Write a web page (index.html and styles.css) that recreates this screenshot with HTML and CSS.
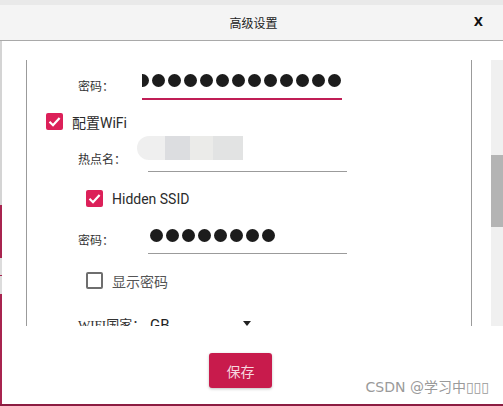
FILE: index.html
```html
<!DOCTYPE html>
<html lang="zh">
<head>
  <meta charset="UTF-8">
  <meta name="viewport" content="width=device-width, initial-scale=1.0">
  <title>高级设置</title>
  <link rel="stylesheet" href="styles.css">
</head>
<body>
  <div class="top-strip"></div>
  <div class="header">
    <span class="title">高级设置</span>
    <span class="close">X</span>
  </div>

  <div class="main">
    <div class="edge"></div>
    <div class="content">
      <div class="scroll-row">
        <div class="frame">
          <div class="prev-line"></div>

          <div class="field-row pw-row">
            <span class="label">密码：</span>
            <div class="field active">
              <div class="dots dots-long">
                <i></i><i></i><i></i><i></i><i></i><i></i><i></i><i></i><i></i><i></i><i></i><i></i><i></i>
              </div>
            </div>
          </div>

          <label class="check wifi-check">
            <span class="box checked"><svg viewBox="0 0 17 17"><path d="M3.5 8.8 L7 12.2 L13.6 5" /></svg></span>
            <span class="check-text">配置WiFi</span>
          </label>

          <div class="field-row ssid-row">
            <span class="label">热点名：</span>
            <div class="field plain">
              <div class="blur"></div>
            </div>
          </div>

          <label class="check sub-check hidden-check">
            <span class="box checked"><svg viewBox="0 0 17 17"><path d="M3.5 8.8 L7 12.2 L13.6 5" /></svg></span>
            <span class="check-text">Hidden SSID</span>
          </label>

          <div class="field-row pw2-row">
            <span class="label">密码：</span>
            <div class="field plain">
              <div class="dots dots-short">
                <i></i><i></i><i></i><i></i><i></i><i></i><i></i><i></i>
              </div>
            </div>
          </div>

          <label class="check sub-check show-check">
            <span class="box"></span>
            <span class="check-text muted">显示密码</span>
          </label>

          <div class="field-row country-row">
            <span class="label serif">WIFI国家：</span>
            <div class="select">
              <span>GB</span>
              <span class="arrow"></span>
            </div>
          </div>
        </div>
        <div class="scrollbar"><div class="thumb"></div></div>
      </div>

      <div class="actions">
        <button class="save">保存</button>
      </div>
    </div>
    <div class="watermark">CSDN @学习中▯▯▯</div>
  </div>
</body>
</html>
```

FILE: styles.css
```css
body {
  margin: 0;
  width: 503px;
  height: 406px;
  overflow: hidden;
  background: #ffffff;
  font-family: Roboto, "Noto Sans CJK SC", sans-serif;
  color: #2b2b2b;
  display: flex;
  flex-direction: column;
}

.top-strip {
  height: 5px;
  background: #e9e9e9;
}

.header {
  height: 35px;
  background: #f4f4f4;
  border-bottom: 1px solid #a9a9a9;
  display: flex;
  align-items: center;
  justify-content: center;
  position: relative;
}
.title {
  font-family: "Noto Sans CJK SC", sans-serif;
  font-size: 12px;
  color: #222;
  margin-left: 4px;
}
.close {
  position: absolute;
  right: 20px;
  top: 10px;
  font-family: "DejaVu Sans", sans-serif;
  font-weight: bold;
  font-size: 12px;
  color: #111;
}

.main {
  flex: 1;
  display: flex;
  position: relative;
  border-bottom: 2px solid #8c1d42;
}
.edge {
  width: 2px;
  background: linear-gradient(180deg,
    #d4d4d4 0, #d4d4d4 164px,
    #a8244f 164px, #a8244f 217px,
    #dcdcdc 217px, #dcdcdc 234px,
    #a8244f 234px, #a8244f 235px,
    #dcdcdc 235px, #dcdcdc 253px,
    #a8244f 253px);
}
.content {
  flex: 1;
  display: flex;
  flex-direction: column;
}

.scroll-row {
  display: flex;
  margin-top: 19px;
  height: 266px;
}
.frame {
  margin-left: 24px;
  width: 444px;
  border-left: 1px solid #9b9b9b;
  border-right: 1px solid #9b9b9b;
  overflow: hidden;
  display: flex;
  flex-direction: column;
}
.scrollbar {
  margin-left: 19px;
  width: 12px;
  background: #f0f0f0;
  padding-top: 95px;
}
.thumb {
  height: 72px;
  background: #b4b4b4;
}

.prev-line {
  height: 1px;
  width: 200px;
  margin: 1px 0 0 115px;
  background: #9b9b9b;
}

.field-row {
  display: flex;
  align-items: flex-end;
  padding-left: 51px;
  flex-shrink: 0;
}
.label {
  font-family: "Noto Sans CJK SC", sans-serif;
  font-size: 12px;
  line-height: 20px;
  color: #333;
}
.field {
  display: flex;
  align-items: center;
  overflow: hidden;
}

.pw-row {
  height: 39px;
}
.pw-row .label {
  width: 64px;
  margin-bottom: 4px;
}
.field.active {
  width: 200px;
  height: 35px;
  padding-top: 2px;
  border-bottom: 2px solid #c01e56;
}

.ssid-row {
  margin-top: 7px;
  height: 35px;
}
.ssid-row .label,
.pw2-row .label {
  width: 70px;
  margin-bottom: 3px;
}
.field.plain {
  width: 199px;
  height: 34px;
  border-bottom: 1px solid #9b9b9b;
  overflow: visible;
}
.blur {
  margin: -12px 0 0 -11px;
  width: 106px;
  height: 24px;
  border-radius: 12px 0 0 12px;
  background: linear-gradient(90deg,
    #efefef 0, #efefef 28px,
    #dcdde0 28px, #dcdde0 53px,
    #ebebe9 53px, #ebebe9 76px,
    #e2e3e3 76px);
  filter: blur(0.6px);
}

.pw2-row {
  margin-top: 10px;
  height: 37px;
}
.pw2-row .label {
  margin-bottom: 4px;
}
.pw2-row .field.plain {
  height: 36px;
  align-items: center;
}

.dots {
  display: flex;
  flex-shrink: 0;
  gap: 3px;
}
.dots i {
  display: block;
  width: 13px;
  height: 13px;
  border-radius: 50%;
  background: #1c1c1c;
}
.dots-long {
  margin-left: -6px;
}
.dots-short {
  margin-left: 2px;
}

.check {
  display: flex;
  align-items: center;
  gap: 9px;
  height: 17px;
  flex-shrink: 0;
}
.wifi-check {
  margin: 13px 0 0 19px;
}
.sub-check {
  margin: 18px 0 0 59px;
}
.box {
  width: 17px;
  height: 17px;
  box-sizing: border-box;
  border: 2px solid #6e6e6e;
  border-radius: 2px;
  display: flex;
}
.box.checked {
  border: none;
  background: #dc2059;
}
.box svg {
  width: 17px;
  height: 17px;
}
.box path {
  fill: none;
  stroke: #ffffff;
  stroke-width: 2.2;
}
.check-text {
  font-size: 14px;
  color: #2b2b2b;
}
.check-text.muted {
  color: #555;
}

.country-row {
  margin-top: 27px;
  align-items: flex-start;
}
.country-row .label {
  width: 72px;
  font-size: 13px;
  line-height: 17px;
}
.serif {
  font-family: "Liberation Serif", "Noto Sans CJK SC", serif;
}
.select {
  display: flex;
  align-items: flex-start;
  width: 101px;
  font-size: 15px;
  line-height: 18px;
  justify-content: space-between;
  color: #222;
}
.arrow {
  width: 0;
  height: 0;
  border-left: 4px solid transparent;
  border-right: 4px solid transparent;
  border-top: 5px solid #222;
  margin-top: 5px;
}

.actions {
  margin-top: 27px;
  padding-left: 207px;
}
.save {
  width: 63px;
  height: 35px;
  border: none;
  border-radius: 3px;
  background: #c81b4c;
  color: #f6d6df;
  font-family: "Noto Sans CJK SC", sans-serif;
  font-size: 14px;
  box-shadow: 0 1px 3px rgba(0, 0, 0, 0.25);
  cursor: pointer;
}

.watermark {
  position: absolute;
  right: 14px;
  bottom: 8px;
  font-family: "DejaVu Sans", "Noto Sans CJK SC", sans-serif;
  font-size: 14px;
  color: #9a9a9a;
  text-shadow: 0 0 2px #fff;
}
```
